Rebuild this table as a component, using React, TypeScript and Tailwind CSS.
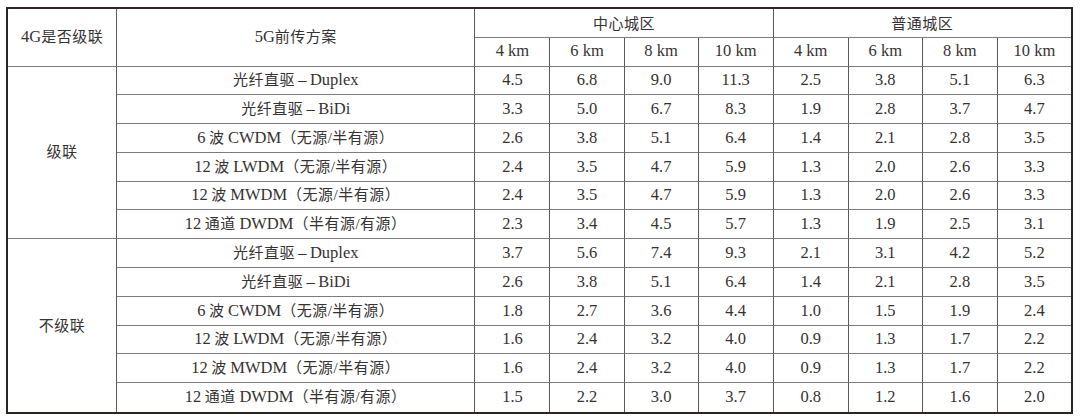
import React from "react";

const cols = ["4 km", "6 km", "8 km", "10 km"];

const groups = [
  {
    name: "级联",
    rows: [
      { label: "光纤直驱–Duplex", v: ["4.5", "6.8", "9.0", "11.3", "2.5", "3.8", "5.1", "6.3"] },
      { label: "光纤直驱–BiDi", v: ["3.3", "5.0", "6.7", "8.3", "1.9", "2.8", "3.7", "4.7"] },
      { label: "6 波 CWDM（无源/半有源）", v: ["2.6", "3.8", "5.1", "6.4", "1.4", "2.1", "2.8", "3.5"] },
      { label: "12 波 LWDM（无源/半有源）", v: ["2.4", "3.5", "4.7", "5.9", "1.3", "2.0", "2.6", "3.3"] },
      { label: "12 波 MWDM（无源/半有源）", v: ["2.4", "3.5", "4.7", "5.9", "1.3", "2.0", "2.6", "3.3"] },
      { label: "12 通道 DWDM（半有源/有源）", v: ["2.3", "3.4", "4.5", "5.7", "1.3", "1.9", "2.5", "3.1"] },
    ],
  },
  {
    name: "不级联",
    rows: [
      { label: "光纤直驱–Duplex", v: ["3.7", "5.6", "7.4", "9.3", "2.1", "3.1", "4.2", "5.2"] },
      { label: "光纤直驱–BiDi", v: ["2.6", "3.8", "5.1", "6.4", "1.4", "2.1", "2.8", "3.5"] },
      { label: "6 波 CWDM（无源/半有源）", v: ["1.8", "2.7", "3.6", "4.4", "1.0", "1.5", "1.9", "2.4"] },
      { label: "12 波 LWDM（无源/半有源）", v: ["1.6", "2.4", "3.2", "4.0", "0.9", "1.3", "1.7", "2.2"] },
      { label: "12 波 MWDM（无源/半有源）", v: ["1.6", "2.4", "3.2", "4.0", "0.9", "1.3", "1.7", "2.2"] },
      { label: "12 通道 DWDM（半有源/有源）", v: ["1.5", "2.2", "3.0", "3.7", "0.8", "1.2", "1.6", "2.0"] },
    ],
  },
];

// vertical rules darker, horizontal rules a lighter grey
const vr = "border-r border-r-[#5a5a5a]";
const hr = "border-b border-b-[#7c7c7c]";

// latin runs are set a touch larger than the CJK text, like the printed table
function Mixed({ text }: { text: string }) {
  const parts = text.split(/([A-Za-z0-9.–]+)/);
  return (
    <>
      {parts.map((p, i) =>
        /[A-Za-z0-9–]/.test(p) ? (
          <span key={i} className="text-[16.5px]">
            {p.replace("–", "\u2009–\u2009")}
          </span>
        ) : (
          <span key={i} className="text-[15px] tracking-[0.5px]">
            {p.replace(/ /g, "\u2009")}
          </span>
        )
      )}
    </>
  );
}

export default function App() {
  return (
    <div
      className="w-[1080px] h-[420px] bg-white pt-[7px] pl-[6px] text-[#363232]"
      style={{ fontFamily: '"Liberation Serif", "Noto Sans CJK SC", serif' }}
    >
      <div className="w-[1067px] border-[2.5px] border-[#2b2523]">
        <table className="w-full table-fixed border-separate border-spacing-0 text-center leading-none">
          <colgroup>
            <col className="w-[109px]" />
            <col className="w-[358px]" />
            <col className="w-[75px]" />
            <col className="w-[74px]" />
            <col className="w-[74px]" />
            <col className="w-[75px]" />
            <col className="w-[75px]" />
            <col className="w-[74px]" />
            <col className="w-[75px]" />
            <col className="w-[73px]" />
          </colgroup>
          <thead>
            <tr className="h-[28.5px]">
              <th rowSpan={2} className={`${vr} ${hr} p-0 font-normal`}>
                <Mixed text="4G是否级联" />
              </th>
              <th rowSpan={2} className={`${vr} ${hr} p-0 font-normal`}>
                <Mixed text="5G前传方案" />
              </th>
              <th colSpan={4} className={`${vr} ${hr} p-0 pt-[2px] font-normal`}>
                <Mixed text="中心城区" />
              </th>
              <th colSpan={4} className={`${hr} p-0 pt-[2px] font-normal`}>
                <Mixed text="普通城区" />
              </th>
            </tr>
            <tr className="h-[29px] text-[16.5px]">
              {[...cols, ...cols].map((c, i) => (
                <th key={i} className={`${i < 7 ? vr : ""} ${hr} p-0 font-normal`}>
                  {c}
                </th>
              ))}
            </tr>
          </thead>
          <tbody>
            {groups.map((g, gi) =>
              g.rows.map((r, ri) => {
                const last = gi === groups.length - 1 && ri === g.rows.length - 1;
                const rowB = last ? "" : hr;
                return (
                  <tr key={`${gi}-${ri}`} className="h-[28.8px]">
                    {ri === 0 && (
                      <td
                        rowSpan={g.rows.length}
                        className={`${vr} ${gi === groups.length - 1 ? "" : hr} p-0`}
                      >
                        <Mixed text={g.name} />
                      </td>
                    )}
                    <td className={`${vr} ${rowB} p-0 whitespace-nowrap`}>
                      <Mixed text={r.label} />
                    </td>
                    {r.v.map((x, i) => (
                      <td key={i} className={`${i < 7 ? vr : ""} ${rowB} p-0 text-[16.5px]`}>
                        {x}
                      </td>
                    ))}
                  </tr>
                );
              })
            )}
          </tbody>
        </table>
      </div>
    </div>
  );
}
